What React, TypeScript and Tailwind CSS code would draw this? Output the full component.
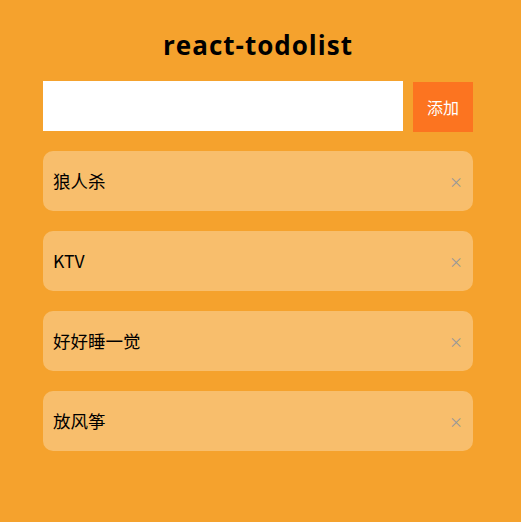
import React from "react";

const items = ["狼人杀", "KTV", "好好睡一觉", "放风筝"];

export default function App() {
  return (
    <div
      className="min-h-[522px] w-full bg-[#f5a22d] pt-[26px]"
      style={{ fontFamily: '"Noto Sans CJK SC", "Noto Sans", sans-serif' }}
    >
      <div className="ml-[43px] flex w-[430px] flex-col">
        <h1
          className="text-center text-[26px] font-bold leading-[38px] tracking-[1px] text-black"
          style={{ fontFamily: '"Open Sans", "Noto Sans CJK SC", sans-serif' }}
        >
          react-todolist
        </h1>
        <div className="mt-[17px] flex items-start gap-[10px]">
          <input className="h-[50px] w-[360px] bg-white px-2 outline-none" />
          <button className="mt-px h-[50px] w-[60px] bg-[#fc7420] text-[16px] text-white">添加</button>
        </div>
        <div className="mt-[19px] flex flex-col gap-[20px]">
          {items.map((t) => (
            <div
              key={t}
              className="flex h-[60px] items-center justify-between rounded-[10px] bg-[#f8be6c] pl-[10px] pr-[10px]"
            >
              <span className="text-[17.5px] text-black">{t}</span>
              <span className="text-[14px] text-[#999]">×</span>
            </div>
          ))}
        </div>
      </div>
    </div>
  );
}
